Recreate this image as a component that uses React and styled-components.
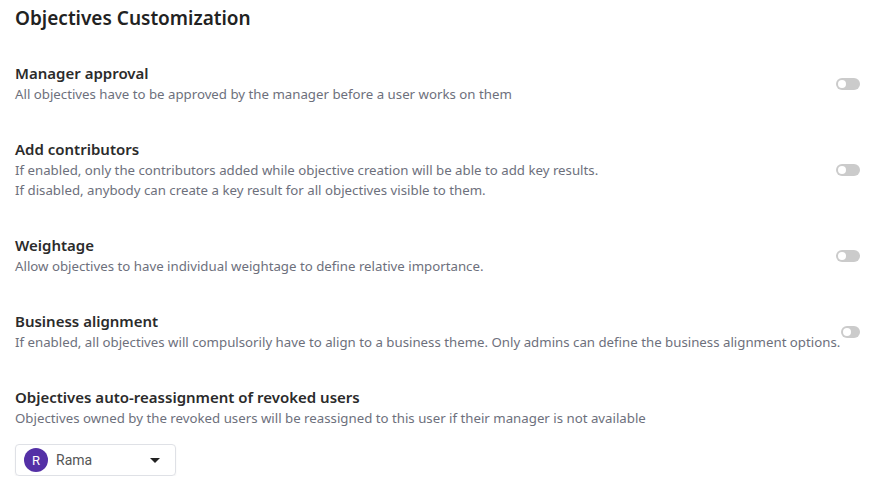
import React from 'react';
import styled, { createGlobalStyle } from 'styled-components';

const GlobalStyle = createGlobalStyle`
  body {
    margin: 0;
    background: #fff;
    font-family: "Noto Sans", "Open Sans", sans-serif;
  }
`;

const Page = styled.div`
  padding: 5px 16px 0 15px;
`;

const Heading = styled.h1`
  margin: 0 0 31px;
  font-size: 19px;
  line-height: 26px;
  font-weight: 600;
  color: #222;
`;

const Row = styled.div`
  display: flex;
  align-items: center;
  justify-content: space-between;
  margin-bottom: ${p => (p.last ? '16px' : '34px')};
`;

const Info = styled.div`
  display: flex;
  flex-direction: column;
  gap: 1px;
`;

const Title = styled.div`
  font-size: 15px;
  line-height: 22px;
  font-weight: 600;
  color: #2b2b2b;
`;

const Desc = styled.div`
  font-size: 13.25px;
  line-height: 19px;
  color: #6d707c;
  white-space: nowrap;
`;

const Toggle = styled.div`
  flex: none;
  width: ${p => (p.narrow ? '19px' : '24px')};
  height: 12px;
  border-radius: 6px;
  background: #cbcbcb;
  display: flex;
  align-items: center;
  padding: 0 2px;
  box-sizing: border-box;
  margin-top: 2px;

  &::after {
    content: '';
    width: 8px;
    height: 8px;
    border-radius: 50%;
    background: #fff;
  }
`;

const Select = styled.div`
  width: 161px;
  height: 32px;
  box-sizing: border-box;
  border: 1px solid #dfe1e6;
  border-radius: 4px;
  display: flex;
  align-items: center;
  padding: 0 15px 0 8px;
  gap: 8px;
  font-family: Roboto, "Noto Sans", sans-serif;
  box-shadow: 0 1px 2px rgba(0, 0, 0, 0.06);
`;

const Avatar = styled.div`
  width: 24px;
  height: 24px;
  border-radius: 50%;
  background: #5430a6;
  color: #fff;
  font-size: 13px;
  display: flex;
  align-items: center;
  justify-content: center;
`;

const Name = styled.span`
  flex: 1;
  font-size: 14px;
  color: #555;
`;

const Caret = styled.span`
  width: 0;
  height: 0;
  border-left: 5px solid transparent;
  border-right: 5px solid transparent;
  border-top: 5px solid #222;
`;

const settings = [
  {
    title: 'Manager approval',
    lines: ['All objectives have to be approved by the manager before a user works on them'],
  },
  {
    title: 'Add contributors',
    lines: [
      'If enabled, only the contributors added while objective creation will be able to add key results.',
      'If disabled, anybody can create a key result for all objectives visible to them.',
    ],
  },
  {
    title: 'Weightage',
    lines: ['Allow objectives to have individual weightage to define relative importance.'],
  },
  {
    title: 'Business alignment',
    lines: [
      'If enabled, all objectives will compulsorily have to align to a business theme. Only admins can define the business alignment options.',
    ],
    narrow: true,
  },
];

const App = () => {
  return (
    <Page>
      <GlobalStyle />
      <Heading>Objectives Customization</Heading>
      {settings.map(s => (
        <Row key={s.title}>
          <Info>
            <Title>{s.title}</Title>
            {s.lines.map(l => (
              <Desc key={l}>{l}</Desc>
            ))}
          </Info>
          <Toggle narrow={s.narrow} />
        </Row>
      ))}
      <Row last>
        <Info>
          <Title>Objectives auto-reassignment of revoked users</Title>
          <Desc>Objectives owned by the revoked users will be reassigned to this user if their manager is not available</Desc>
        </Info>
      </Row>
      <Select>
        <Avatar>R</Avatar>
        <Name>Rama</Name>
        <Caret />
      </Select>
    </Page>
  );
};

export default App;
